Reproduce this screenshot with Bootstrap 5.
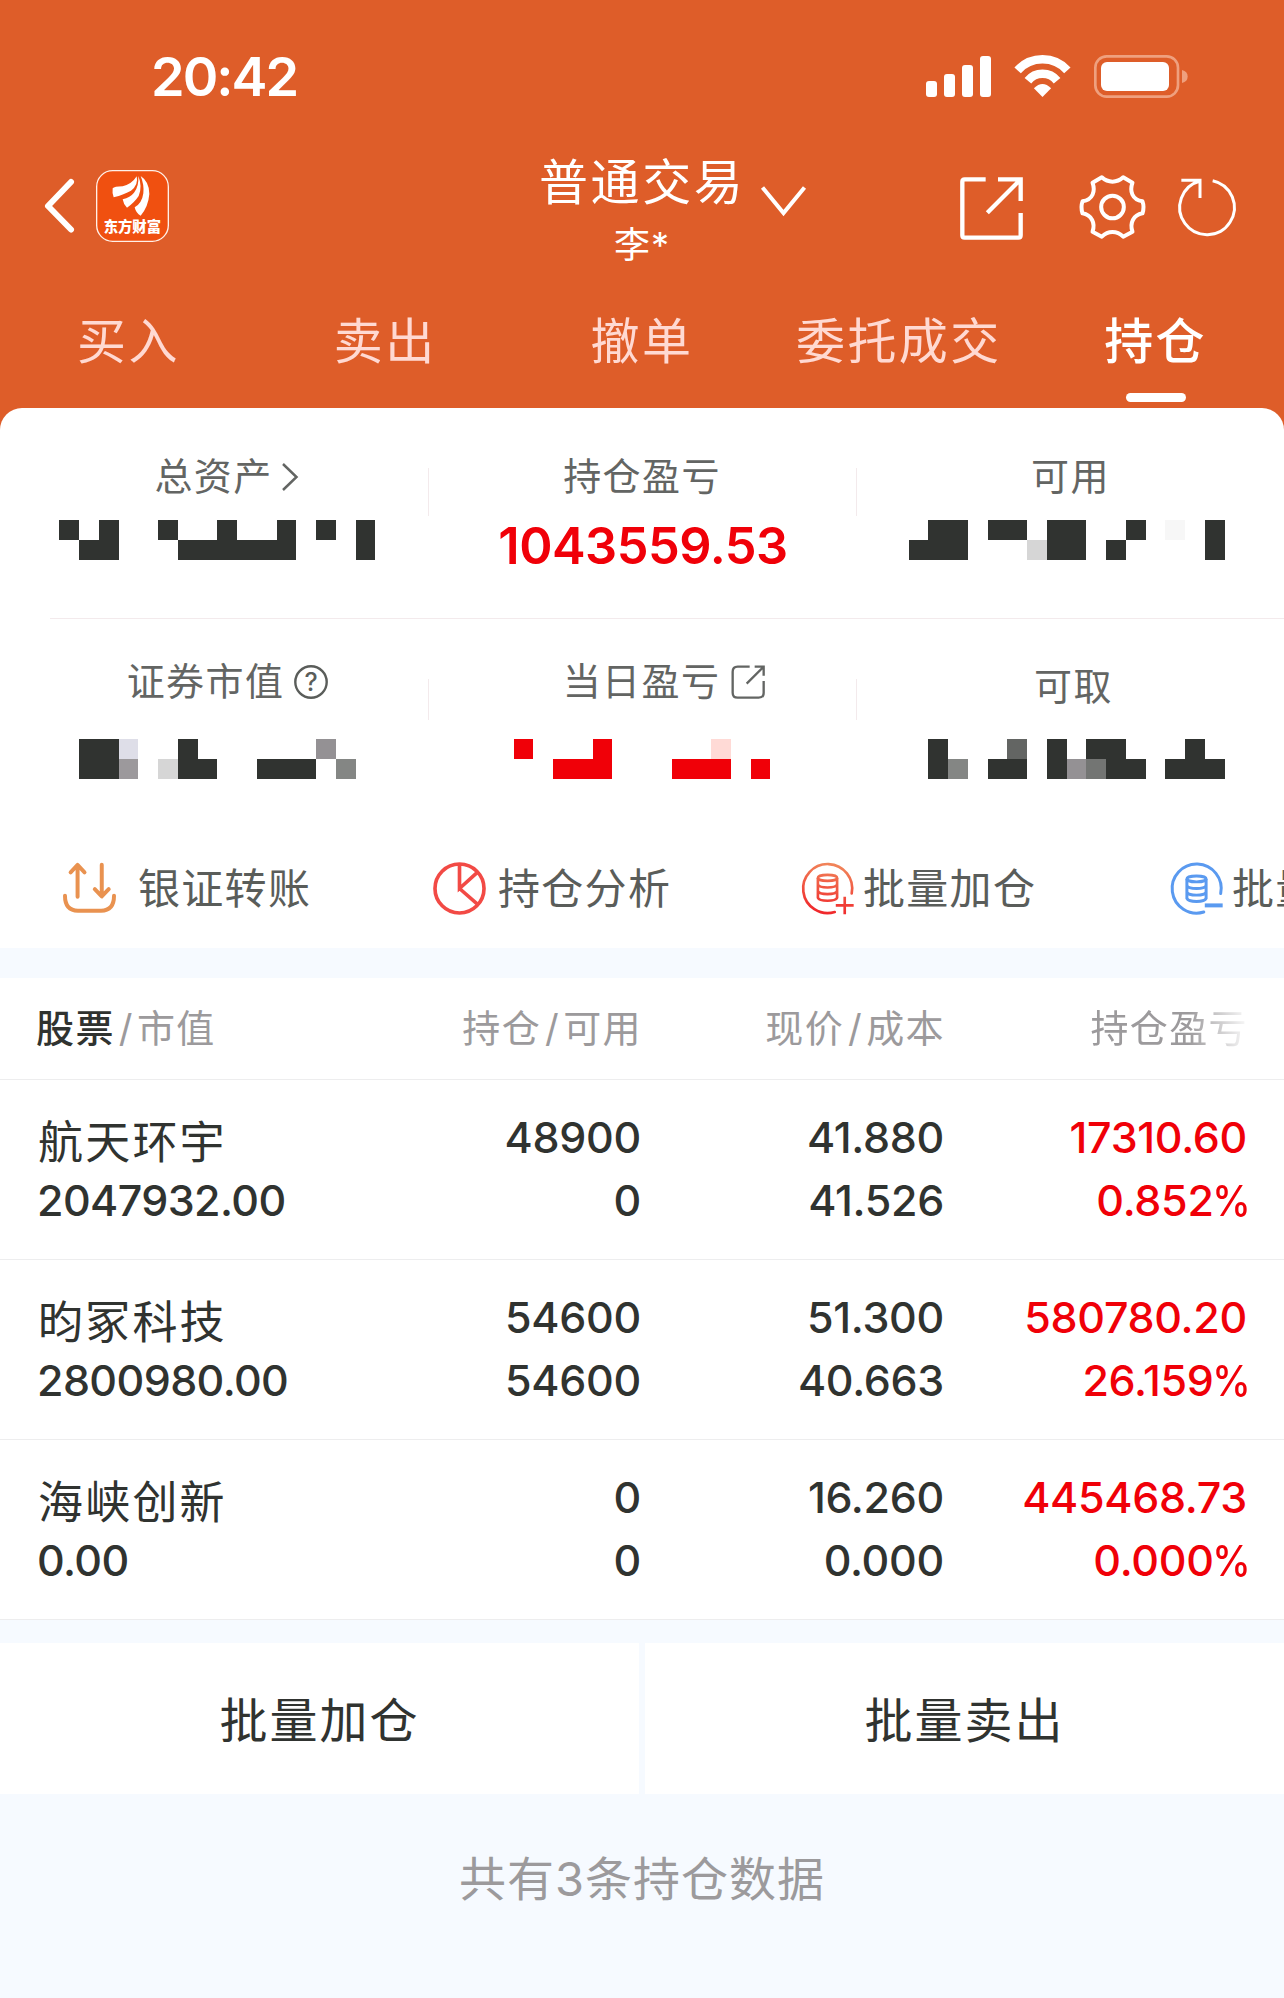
<!DOCTYPE html>
<html lang="zh-CN">
<head>
<meta charset="utf-8">
<meta name="viewport" content="width=device-width, initial-scale=1">
<title>普通交易 - 持仓</title>
<link href="https://cdn.jsdelivr.net/npm/bootstrap@5.3.0/dist/css/bootstrap.min.css" rel="stylesheet">
<style>
body{font-family:Inter,"Noto Sans CJK SC",sans-serif;background:#f6faff;color:#303330;overflow-x:hidden}
svg{display:block;flex:none;overflow:visible}
.app-head{background:#de5d29;height:432px;color:#fff}
.status-row{height:150px;padding:2px 96px 0 151px}
.clock{font-size:54px;font-weight:600;line-height:1;letter-spacing:-2px;padding-top:2px}
.nav-grid{display:grid;grid-template-columns:1fr 200px 1fr;height:112px}
.nav-side{height:112px}
.t-title{font-size:49px;line-height:66px;letter-spacing:2.6px;white-space:nowrap;margin-left:-3px}
.t-user{font-size:36px;line-height:58px;letter-spacing:1px}
.tabs-row{height:146px;padding-top:43px}
.tab-item{flex:1 1 0;text-align:center;font-size:49px;line-height:74px;letter-spacing:2.4px;color:#ffd9d2;white-space:nowrap}
.tab-item.active{color:#fff;font-weight:500}
.tab-bar{width:60px;height:9px;border-radius:5px;background:#fff;margin:14px auto 0}
.panel{margin-top:-24px;background:#fff;border-radius:22px 22px 0 0;height:540px;overflow:hidden}
.asset-row{display:grid;grid-template-columns:repeat(3,428px);height:210px;position:relative}
.asset-cell{position:relative;padding-top:48px}
.asset-cell+.asset-cell::before{content:"";position:absolute;left:0;top:60px;width:1px;height:48px;background:#f3eaec}
.asset-row.second .asset-cell{padding-top:42px}
.asset-row.second .asset-cell::before{height:41px}
.asset-line{height:1px;background:#f3eaec;margin-left:50px}
.a-label{font-size:38px;line-height:40px;letter-spacing:1.4px;color:#636563;height:40px}
.a-first{padding-left:24px}
.mosaic{margin-top:24px}
.second .mosaic{margin-top:38px}
.profit{font-size:50.5px;font-weight:600;line-height:50px;color:#f00008;margin-top:25px;text-align:center;letter-spacing:-.5px;padding-left:2px}
.actions{height:119px;padding-left:63px;color:#5a5d5a}
.act{width:368px;flex:none;font-size:42px;letter-spacing:1.3px;line-height:54px;white-space:nowrap}
.holdings{margin-top:30px;background:#fff}
.h-grid{display:grid;grid-template-columns:300px 302px 303px 303px;padding:0 38px;border-bottom:1px solid #ededee}
.h-head{height:102px;align-items:center;font-size:38px;letter-spacing:1.4px;color:#9c9a9c}
.h-head>div{margin-right:-2px}
.h-head>div:first-child{margin-left:-2px}
.h-head span{color:#303330;font-weight:500}
.h-head i{font-style:normal;padding:0 3px 0 4px}
.fade-end{-webkit-mask-image:linear-gradient(90deg,#000 62%,transparent 102%);mask-image:linear-gradient(90deg,#000 62%,transparent 102%)}
.h-row{height:180px;font-size:43px;font-weight:500;line-height:63px;padding-top:26px;letter-spacing:-.3px}
.h-row>div:not(:first-child){margin-right:-1px}
.h-row>div:first-child{letter-spacing:-.6px;margin-left:-1px}
.h-row .h-name{font-size:45px;font-weight:400;letter-spacing:2.2px;padding:5px 0 0 1px;height:63px;white-space:nowrap}
.up{color:#f00008}
.pct{display:inline-block;transform:scaleX(.9);transform-origin:100% 50%;margin:0 -3px 0 -6px}
.batch{margin-top:23px;gap:6px;height:151px}
.batch-btn{border-radius:0;background:#fff;border:0;font-size:48px;letter-spacing:2px;color:#303330;flex:1 1 0;padding:4px 0 0}
.foot{font-size:47px;letter-spacing:1px;color:#9c9a9c;line-height:60px;padding-top:55px}
</style>
<script src="https://cdn.jsdelivr.net/npm/bootstrap@5.3.0/dist/js/bootstrap.bundle.min.js"></script>
</head>
<body>
<header class="app-head">
  <div class="status-row d-flex justify-content-between align-items-center">
    <div class="clock">20:42</div>
    <div class="d-flex align-items-center">
      <svg width="65" height="42" viewBox="0 0 65 42" fill="#fff"><rect y="26" width="11" height="16" rx="3"/><rect x="18" y="19" width="11" height="23" rx="3"/><rect x="36" y="10" width="11" height="32" rx="3"/><rect x="54" y="1" width="11" height="41" rx="3"/></svg>
      <svg style="margin-left:23px" width="57" height="42" viewBox="0 0 172 126" fill="none" stroke="#fff" stroke-width="26"><path d="M11 46A101 101 0 0 1 161 46M42 77A57 57 0 0 1 130 77"/><path d="M86 126L60 100Q86 74 112 100Z" fill="#fff" stroke="none"/></svg>
      <svg style="margin-left:23px" width="94" height="43" viewBox="0 0 282 129"><rect x="4" y="4" width="248" height="121" rx="34" fill="none" stroke="#efa07e" stroke-width="8"/><rect x="21" y="21" width="204" height="87" rx="18" fill="#fff"/><path d="M264 45Q281 49 281 64.500T264 84Z" fill="#efa07e"/></svg>
    </div>
  </div>
  <nav class="nav-grid">
    <div class="nav-side d-flex align-items-center" style="padding-left:44px">
      <svg width="30" height="54" viewBox="0 0 30 54" fill="none" stroke="#fff" stroke-width="6" stroke-linecap="round" stroke-linejoin="round"><path d="M27 3L4 27L27 50.500"/></svg>
      <svg style="margin-left:22px" width="73" height="72" viewBox="0 0 219 216"><rect x="2" y="2" width="215" height="212" rx="48" fill="#f05010" stroke="#fff0e8" stroke-width="4"/><g fill="#fff"><path d="M50 55Q55 49 80 49Q108 42 122 19Q128 45 105 62Q85 73 53 82Q48 68 50 55Z"/><path d="M127 18Q140 50 128 78Q115 98 93 113Q82 102 80 88Q103 82 114 68Q129 50 127 18Z"/><path d="M134 18Q160 35 160 72Q157 110 134 137Q120 130 116 112Q138 100 142 70Q145 45 134 18Z"/><text x="109" y="185" text-anchor="middle" font-size="43" font-weight="900" font-family="Noto Sans CJK SC, sans-serif">东方财富</text></g></svg>
    </div>
    <div class="text-center"><div class="t-title">普通交易</div><div class="t-user">李*</div></div>
    <div class="nav-side d-flex align-items-center">
      <svg style="margin:-10px 0 0 19px" width="45" height="30" viewBox="0 0 45 30" fill="none" stroke="#fff" stroke-width="4"><path d="M1.500 1.500L22.500 27L43.500 1.500"/></svg>
      <svg style="margin:4px 0 0 154px" width="63" height="63" viewBox="0 0 189 189" fill="none" stroke="#fff" stroke-width="13"><path d="M77 7H14Q7 7 7 14V175Q7 182 14 182H175Q182 182 182 175V108M114 7H182V72M82 107L182 7"/></svg>
      <svg style="margin:2px 0 0 56px" width="67" height="64" viewBox="0 0 200 192" fill="none" stroke="#fff" stroke-width="12" stroke-linejoin="round"><path d="M68 7Q82 20 100 20Q118 20 132 7L160 23C151 48 158 74 190 79Q196 96 190 115C162 120 151 145 160 170L132 185Q118 171 100 171Q82 171 68 185L40 170C49 145 38 120 10 115Q4 96 10 79C42 74 49 48 40 23Z"/><circle cx="100" cy="96" r="34"/></svg>
      <svg style="margin:2px 0 0 32px" width="58" height="58" viewBox="0 0 174 174" fill="none" stroke="#fff" stroke-width="9"><path d="M104 8A82 82 0 1 1 66 9M10 7H66V60"/></svg>
    </div>
  </nav>
  <div class="tabs-row d-flex">
    <div class="tab-item">买入</div><div class="tab-item">卖出</div><div class="tab-item">撤单</div><div class="tab-item">委托成交</div>
    <div class="tab-item active">持仓<div class="tab-bar"></div></div>
  </div>
</header>

<section class="panel position-relative">
  <div class="asset-row">
    <div class="asset-cell">
      <div class="a-label a-first d-flex justify-content-center align-items-center">总资产<svg style="margin:1px 0 0 9px" width="16" height="28" viewBox="0 0 16 28" fill="none" stroke="#636563" stroke-width="2.500"><path d="M1 1L14.500 14L1 27"/></svg></div>
      <svg class="mosaic" width="428" height="40" viewBox="0 0 428 40" fill="#303330" shape-rendering="crispEdges"><path d="M59 0h20v20h20V0h20v40H79V20H59zM158 0h20v20h39V0h20v20h40V0h19v40H178V20h-20zM316 0h20v20h-20zM356 0h19v40h-19z"/></svg>
    </div>
    <div class="asset-cell">
      <div class="a-label text-center">持仓盈亏</div>
      <div class="profit">1043559.53</div>
    </div>
    <div class="asset-cell">
      <div class="a-label text-center" style="padding-left:1px">可用</div>
      <svg class="mosaic" width="428" height="40" viewBox="856 0 428 40" fill="#303330" shape-rendering="crispEdges"><path d="M909 20h19V0h40v40h-59zM988 0h39v20h-39zM1047 0h39v40h-39zM1106 20h20v20h-20zM1126 0h20v20h-20zM1205 0h20v40h-20z"/><path fill="#d6d6d6" d="M1027 20h20v20h-20z"/><path fill="#f7f7f7" d="M1165 0h20v20h-20z"/></svg>
    </div>
  </div>
  <div class="asset-line"></div>
  <div class="asset-row second">
    <div class="asset-cell">
      <div class="a-label a-first d-flex justify-content-center align-items-center" style="padding-left:27px">证券市值<svg style="margin:1px 0 0 10px" width="34" height="34" viewBox="0 0 34 34"><circle cx="17" cy="17" r="15.700" fill="none" stroke="#5a5d5a" stroke-width="2.400"/><text x="17" y="26" text-anchor="middle" font-size="25" font-weight="500" letter-spacing="0" fill="#5a5d5a">?</text></svg></div>
      <svg class="mosaic" width="428" height="40" viewBox="0 0 428 40" fill="#303330" shape-rendering="crispEdges"><path d="M79 0h40v40H79zM178 0h20v20h19v20h-39zM257 20h59v20h-59z"/><path fill="#dedee8" d="M119 0h19v20h-19z"/><path fill="#9c999c" d="M119 20h19v20h-19z"/><path fill="#d6d6d6" d="M158 20h20v20h-20z"/><path fill="#949194" d="M316 0h20v20h-20z"/><path fill="#848684" d="M336 20h20v20h-20z"/></svg>
    </div>
    <div class="asset-cell">
      <div class="a-label d-flex justify-content-center align-items-center" style="padding-left:44px">当日盈亏<svg style="margin:1px 0 0 11px" width="34" height="34" viewBox="0 0 102 102" fill="none" stroke="#636563" stroke-width="7"><path d="M56 5H20Q5 5 5 20V83Q5 98 20 98H83Q98 98 98 83V48M71 5H98V32M47 56L97 6"/></svg></div>
      <svg class="mosaic" width="428" height="40" viewBox="428 0 428 40" fill="#f00008" shape-rendering="crispEdges"><path d="M514 0h19v20h-19zM553 20h40V0h19v40h-59zM672 20h59v20h-59zM751 20h19v20h-19z"/><path fill="#ffdad6" d="M711 0h20v20h-20z"/></svg>
    </div>
    <div class="asset-cell">
      <div class="a-label text-center" style="padding:5px 0 0 7px">可取</div>
      <svg class="mosaic" width="428" height="40" viewBox="856 0 428 40" fill="#303330" shape-rendering="crispEdges"><path d="M928 0h20v40h-20zM988 20h39v20h-39zM1047 0h20v40h-20zM1086 0h40v20h20v20h-40V20h-20zM1165 20h20V0h20v20h20v20h-60z"/><path fill="#848684" d="M948 20h20v20h-20z"/><path fill="#636563" d="M1007 0h20v20h-20z"/><path fill="#949194" d="M1067 20h19v20h-19z"/><path fill="#737573" d="M1086 20h20v20h-20z"/></svg>
    </div>
  </div>
  <div class="actions d-flex align-items-center">
    <div class="act d-flex align-items-center">
      <svg width="53" height="53" viewBox="0 0 160 160" fill="none" stroke="#e99250" stroke-width="12" stroke-linecap="round" stroke-linejoin="round"><path d="M44 105V10M23 31L44 9L65 31M117 8V103M96 82L117 104L138 82M6 102Q6 147 45 147H115Q154 147 154 102"/></svg><span style="margin-left:22px">银证转账</span></div>
    <div class="act d-flex align-items-center" style="padding-left:2px">
      <svg width="53" height="53" viewBox="0 0 160 160" fill="none" stroke="#f24a45" stroke-width="11"><circle cx="80" cy="80" r="74"/><path d="M80 6V80L133 32M80 80L134 127"/></svg><span style="margin-left:12px">持仓分析</span></div>
    <div class="act d-flex align-items-center" style="padding-left:2px">
      <svg width="53" height="53" viewBox="0 0 160 160" fill="none" stroke="url(#warm)" stroke-width="8"><defs><linearGradient id="warm" gradientUnits="userSpaceOnUse" x1="110" y1="0" x2="80" y2="160"><stop stop-color="#f18a5c"/><stop offset="1" stop-color="#f0252a"/></linearGradient></defs><path stroke-linecap="round" d="M153 95A74 74 0 1 0 102 151"/><ellipse cx="80" cy="48" rx="29" ry="9"/><path d="M51 48V108Q55 117 80 117T109 108V48M51 68Q55 77 80 77T109 68M51 88Q55 97 80 97T109 88M105 131H159M132 105V158"/></svg><span style="margin-left:9px">批量加仓</span></div>
    <div class="act d-flex align-items-center" style="padding-left:3px">
      <svg width="53" height="53" viewBox="0 0 160 160" fill="none" stroke="#5a9af0" stroke-width="9"><path stroke-linecap="round" d="M153 95A74 74 0 1 0 102 151"/><ellipse cx="80" cy="51" rx="29" ry="9"/><path d="M51 51V110Q55 119 80 119T109 110V51M51 71Q55 80 80 80T109 71M51 91Q55 100 80 100T109 91"/><path stroke-width="12" d="M105 131H159"/></svg><span style="margin-left:9px">批量卖出</span></div>
  </div>
</section>

<section class="holdings">
  <div class="h-grid h-head text-end"><div class="text-start"><span>股票</span><i>/</i>市值</div><div>持仓<i>/</i>可用</div><div>现价<i>/</i>成本</div><div><div class="fade-end d-inline-block">持仓盈亏</div></div></div>
  <div class="h-grid h-row text-end">
    <div class="text-start"><div class="h-name">航天环宇</div><div>2047932.00</div></div>
    <div><div>48900</div><div>0</div></div><div><div>41.880</div><div>41.526</div></div><div class="up"><div>17310.60</div><div>0.852<span class="pct">%</span></div></div>
  </div>
  <div class="h-grid h-row text-end">
    <div class="text-start"><div class="h-name">昀冢科技</div><div>2800980.00</div></div>
    <div><div>54600</div><div>54600</div></div><div><div>51.300</div><div>40.663</div></div><div class="up"><div>580780.20</div><div>26.159<span class="pct">%</span></div></div>
  </div>
  <div class="h-grid h-row text-end">
    <div class="text-start"><div class="h-name">海峡创新</div><div>0.00</div></div>
    <div><div>0</div><div>0</div></div><div><div>16.260</div><div>0.000</div></div><div class="up"><div>445468.73</div><div>0.000<span class="pct">%</span></div></div>
  </div>
</section>
<div class="batch d-flex">
  <button class="btn batch-btn">批量加仓</button><button class="btn batch-btn">批量卖出</button>
</div>
<footer class="foot text-center">共有3条持仓数据</footer>
</body>
</html>
